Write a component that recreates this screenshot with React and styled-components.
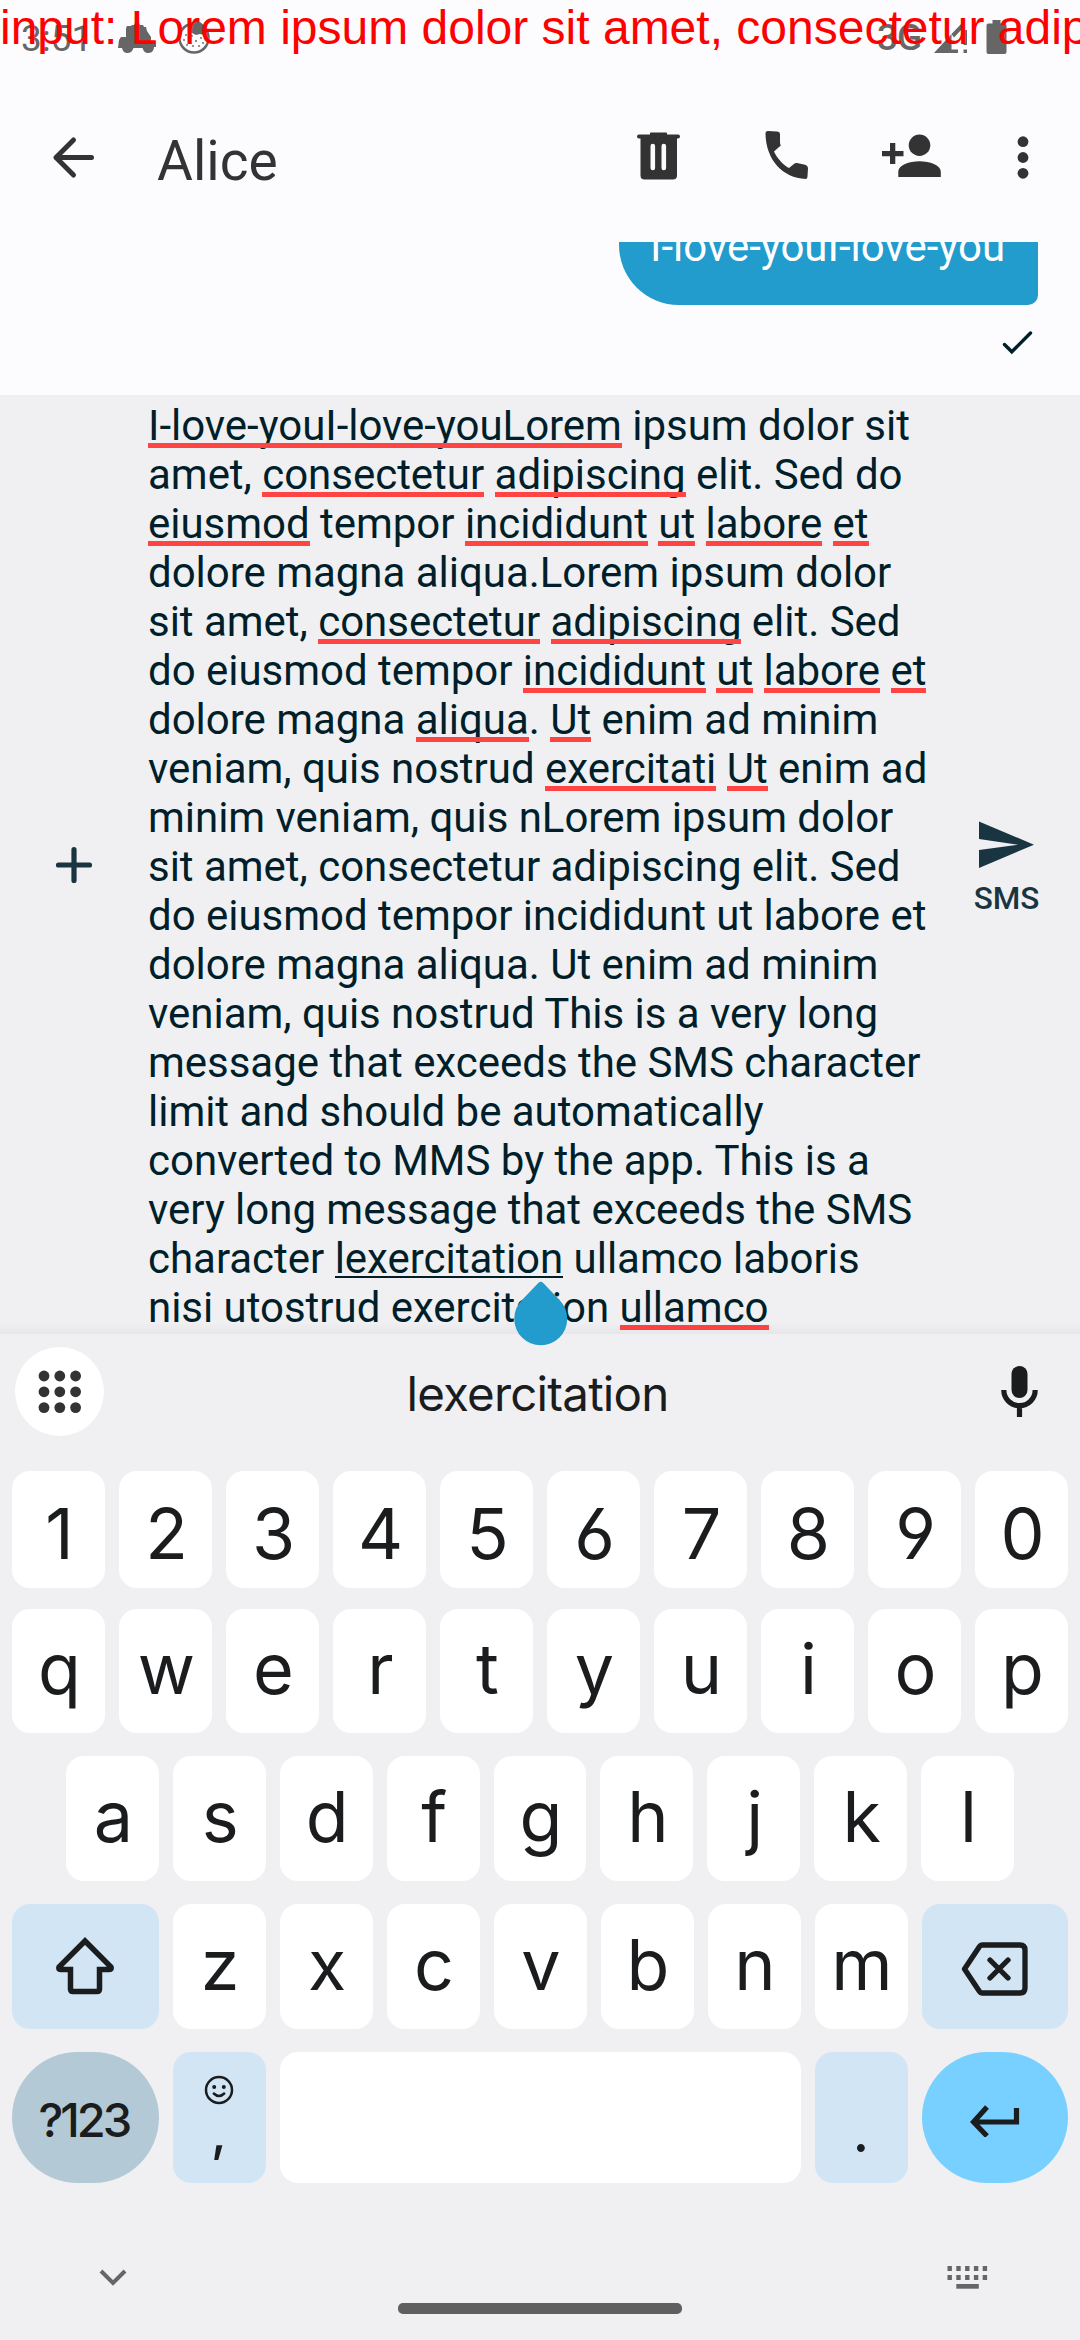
import React from "react";
import styled, { createGlobalStyle } from "styled-components";

const Global = createGlobalStyle`
  * { box-sizing: border-box; }
  html, body { margin: 0; padding: 0; background: #fcfcff; }
  svg { display: block; }
`;

const Screen = styled.div`
  position: relative;
  width: 1080px;
  height: 2340px;
  display: flex;
  flex-direction: column;
  overflow: hidden;
  background: #fcfcff;
  font-family: Roboto, "Liberation Sans", sans-serif;
`;

const DebugText = styled.div`
  position: absolute;
  top: 0;
  left: 0;
  width: 1080px;
  overflow: hidden;
  white-space: nowrap;
  font: 48px/55px "Liberation Sans", Arial, sans-serif;
  color: #ff0000;
`;

const StatusBar = styled.header`
  height: 80px;
  display: flex;
  align-items: flex-start;
  padding: 18px 73px 0 21px;
  color: #666;
`;
const Clock = styled.span`
  font-size: 37px;
  line-height: 42px;
  width: 97px;
`;
const StatusIcons = styled.div`
  display: flex;
  gap: 22px;
  padding-top: 2px;
`;
const StatusRight = styled.div`
  margin-left: auto;
  display: flex;
  align-items: flex-start;
`;
const Network = styled.span`
  font-size: 37px;
  line-height: 42px;
  font-weight: 500;
  letter-spacing: -1px;
  width: 57px;
  margin-top: -1px;
`;
const Signal = styled.svg`
  margin: 2px 18px 0 0;
`;
const Battery = styled.svg`
  margin-top: 2px;
`;

const AppBar = styled.div`
  height: 162px;
  display: flex;
  align-items: flex-start;
  padding: 50px 50px 0 51px;
  color: #333;
`;
const Title = styled.h1`
  margin: -1px 0 0 60px;
  font-size: 55px;
  line-height: 64px;
  font-weight: 400;
`;
const BackIcon = styled.svg`
  margin-top: 5px;
`;
const Actions = styled.div`
  display: flex;
  margin-left: auto;
  align-items: flex-start;
`;
const Action = styled.svg`
  margin-left: ${(p) => p.$gap}px;
`;

const Thread = styled.main`
  height: 153px;
  display: flex;
  flex-direction: column;
  align-items: flex-end;
  padding-right: 42px;
  overflow: hidden;
`;
const Bubble = styled.div`
  width: 419px;
  height: 63px;
  background: #229bcd;
  color: #fff;
  border-radius: 0 0 10px 60px;
  padding-left: 31px;
  font-size: 42px;
  line-height: 49px;
  overflow: hidden;
  white-space: nowrap;
`;
const BubbleText = styled.div`
  margin-top: -20px;
`;
const Sent = styled.svg`
  margin: 25px 4px 0 0;
`;

const Compose = styled.section`
  position: relative;
  height: 939px;
  display: grid;
  grid-template-columns: 148px 800px 1fr;
  background: #f0f0f2;
  color: #001f2a;
`;
const Attach = styled.div`
  display: flex;
  align-items: center;
  justify-content: center;
`;
const Draft = styled.div`
  padding-top: 6px;
  font-size: 42px;
  line-height: 49px;
  letter-spacing: -0.025px;
  white-space: pre;
`;
const Line = styled.div`
  height: 49px;
`;
const Marked = styled.span`
  position: relative;
  &::after {
    content: "";
    position: absolute;
    left: 0;
    right: 0;
    top: 42px;
    height: ${(p) => (p.$composing ? 2 : 5.3)}px;
    background: ${(p) => (p.$composing ? "#001f2a" : "#ff4444")};
  }
`;
const Send = styled.div`
  display: flex;
  flex-direction: column;
  align-items: center;
  padding: 426px 15px 0 0;
  color: #1a3542;
  font-size: 31.5px;
  line-height: 38px;
  font-weight: 500;
`;
const SendLabel = styled.span`
  margin-top: 11px;
`;
const Shade = styled.div`
  position: absolute;
  left: 0;
  right: 0;
  bottom: 0;
  height: 12px;
  background: linear-gradient(rgba(0, 0, 0, 0), rgba(0, 0, 0, 0.04));
`;
const Handle = styled.svg`
  position: absolute;
  left: 514px;
  top: 1281px;
`;

const Keyboard = styled.section`
  height: 1006px;
  display: flex;
  flex-direction: column;
  background: #f0f0f2;
  color: #1a1c1e;
  font-family: Inter, Roboto, sans-serif;
`;
const Strip = styled.div`
  height: 137px;
  display: flex;
  align-items: flex-start;
  padding: 13px 42px 0 15px;
`;
const Apps = styled.div`
  width: 89px;
  height: 89px;
  border-radius: 50%;
  background: #fff;
  display: flex;
  align-items: center;
  justify-content: center;
`;
const Suggestion = styled.span`
  flex: 1;
  text-align: center;
  padding: 17px 0 0 0;
  margin-right: 30px;
  font-size: 47.5px;
  line-height: 60px;
  letter-spacing: -0.8px;
`;
const Mic = styled.svg`
  margin-top: 19px;
`;
const Row = styled.div`
  display: flex;
  gap: 14px;
  padding: 0 ${(p) => p.$inset || 12}px;
  height: ${(p) => p.$height}px;
  margin-bottom: ${(p) => p.$after || 23}px;
`;
const fills = {
  letter: "#ffffff",
  mod: "#d2e5f4",
  symbols: "#b4c9d6",
  enter: "#77d0ff",
};
const Key = styled.div`
  flex: 0 1 ${(p) => p.$width || 93}px;
  min-width: 0;
  display: flex;
  flex-direction: column;
  align-items: center;
  justify-content: center;
  border-radius: ${(p) => (p.$pill ? 66 : 18)}px;
  background: ${(p) => fills[p.$kind || "letter"]};
  font-size: 70px;
  line-height: 84px;
  font-feature-settings: "cv03", "cv04";
  padding: ${(p) => p.$pad || "0 0 4px 2px"};
`;
const ModeLabel = styled.span`
  font-size: 47px;
  font-weight: 500;
  letter-spacing: -3px;
`;
const Period = styled.span`
  font-size: 60px;
  line-height: 60px;
  padding-top: 28px;
`;
const Comma = styled.span`
  font-size: 52px;
  line-height: 50px;
  height: 54px;
  font-weight: 500;
  margin-top: 3px;
`;
const NavBar = styled.div`
  flex: 1;
  display: grid;
  grid-template-columns: 1fr 284px 1fr;
  align-items: start;
  color: #666;
  padding-top: 64px;
`;
const HideIcon = styled.svg`
  margin: 3px 0 0 99px;
`;
const Pill = styled.div`
  height: 11px;
  margin-top: 38px;
  border-radius: 5px;
  background: #5f5f5f;
`;
const Switcher = styled.svg`
  margin: 0 0 0 265px;
`;

const draft = [
  "[I-love-youI-love-youLorem] ipsum dolor sit",
  "amet, [consectetur] [adipiscing] elit. Sed do",
  "[eiusmod] tempor [incididunt] [ut] [labore] [et]",
  "dolore magna aliqua.Lorem ipsum dolor",
  "sit amet, [consectetur] [adipiscing] elit. Sed",
  "do eiusmod tempor [incididunt] [ut] [labore] [et]",
  "dolore magna [aliqua]. [Ut] enim ad minim",
  "veniam, quis nostrud [exercitati] [Ut] enim ad",
  "minim veniam, quis nLorem ipsum dolor",
  "sit amet, consectetur adipiscing elit. Sed",
  "do eiusmod tempor incididunt ut labore et",
  "dolore magna aliqua. Ut enim ad minim",
  "veniam, quis nostrud This is a very long",
  "message that exceeds the SMS character",
  "limit and should be automatically",
  "converted to MMS by the app. This is a",
  "very long message that exceeds the SMS",
  "character {lexercitation} ullamco laboris",
  "nisi utostrud exercitation [ullamco]",
];

function renderLine(text) {
  return text.split(/(\[[^\]]+\]|\{[^}]+\})/).map((part, i) => {
    if (part[0] === "[") return <Marked key={i}>{part.slice(1, -1)}</Marked>;
    if (part[0] === "{") return <Marked key={i} $composing>{part.slice(1, -1)}</Marked>;
    return part;
  });
}

const Keys = ({ chars, pad }) =>
  chars.split("").map((c) => <Key key={c} $pad={pad}>{c}</Key>);

const gridDots = [0, 1, 2].flatMap((r) => [0, 1, 2].map((c) => [c, r]));
const kbDots = [0, 1].flatMap((r) => [0, 1, 2, 3, 4].map((c) => [c, r]));

export default function App() {
  return (
    <Screen>
      <Global />
      <StatusBar>
        <Clock>3:51</Clock>
        <StatusIcons>
          <svg width="38" height="34" viewBox="0 0 38 34" fill="currentColor">
            <path d="M9 6h4l1-1h2l1-2h4l1 2h3l1 2h2l1 4 4 6v4l3 1v1l2 1v3h-2c0 3-2 6-5.500 6s-5-2-6-5h-9c-1 3-3 5-6 5s-5-2-5.500-5H0l1-8 2-3h5V8z" />
          </svg>
          <svg width="32" height="34" viewBox="0 0 32 34">
            <ellipse cx="16" cy="18" rx="14.500" ry="14.500" fill="none" stroke="#666" strokeWidth="2.500" />
            <path d="M12 4l4-3 6 1 5 4 3 5-4 4-4-1-4 1-4-2-3-4z" fill="#666" />
            <g fill="#666">
              <circle cx="8" cy="15" r="0.900" /><circle cx="6" cy="20" r="0.900" />
              <circle cx="11" cy="19" r="0.900" /><circle cx="18" cy="21" r="1" />
              <circle cx="23" cy="18" r="0.900" /><circle cx="15" cy="26" r="0.900" />
              <circle cx="21" cy="26" r="0.900" /><circle cx="9" cy="25" r="0.900" />
              <circle cx="25" cy="23" r="0.900" /><circle cx="14" cy="16" r="0.900" />
            </g>
          </svg>
        </StatusIcons>
        <StatusRight>
          <Network>3G</Network>
          <Signal width="34" height="34" viewBox="0 0 34 34" fill="currentColor">
            <path d="M0 33L17.500 14v15.500H24V33z" />
            <path d="M17.500 14L29 2v6l-9 9.500z" />
            <path d="M29.500 10H33v15h-3.500zM29.500 29.500H33V33h-3.500z" />
          </Signal>
          <Battery width="21" height="35" viewBox="0 0 21 35" fill="currentColor">
            <path d="M6.500 0h8v3.500H18.500q2 0 2 2V32q0 2-2 2H2.500q-2 0-2-2V5.500q0-2 2-2h4z" />
          </Battery>
        </StatusRight>
      </StatusBar>

      <AppBar>
        <BackIcon width="46" height="46" viewBox="0 0 46 46" fill="none" stroke="currentColor" strokeWidth="5" strokeLinecap="round" strokeLinejoin="round">
          <path d="M40.500 22.500H5M22.500 5L5 22.500 22.500 40" />
        </BackIcon>
        <Title>Alice</Title>
        <Actions>
          <Action $gap={0} width="43" height="51" viewBox="0 0 43 51">
            <path fill="currentColor" d="M13 3q0-0.500 1-0.500h15q1 0 1 0.500v1.500h11q2 0 2 2t-2 2h-1V45.500q0 4-4 4H7.500q-4 0-4-4V8.500H2q-2 0-2-2t2-2h11zM13.500 16v22a2.300 2.300 0 0 0 4.600 0V16a2.300 2.300 0 0 0-4.600 0zM24.500 16v22a2.300 2.300 0 0 0 4.600 0V16a2.300 2.300 0 0 0-4.600 0z" fillRule="evenodd" />
          </Action>
          <Action $gap={85.5} width="43" height="51" viewBox="0 0 43 51" fill="currentColor">
            <path d="M3 1l9 .4q3 0 3 3V12q0 2 .8 3.600L9 21.500C12 28 18 35 24 38l5.500-4.500q1-.7 2.500-.4l7 1.300q4 .8 4 4L42.500 46q0 3-2 3C18 48 1 30 .5 4Q.3 1 3 1z" />
          </Action>
          <Action $gap={74} width="60" height="51" viewBox="0 0 60 51" fill="currentColor">
            <ellipse cx="37.500" cy="15.300" rx="10.800" ry="10.700" />
            <path d="M16.300 47v-5.500c0-6.500 11-10.300 21.200-10.300s21.300 3.800 21.300 10.300V47zM8 13h5.300v8h8.200v5.300h-8.200V34H8v-7.700H0V21h8z" />
          </Action>
          <Action $gap={75} width="13" height="51" viewBox="0 0 13 51" fill="currentColor">
            <circle cx="6" cy="11.700" r="5.400" /><circle cx="6" cy="27.500" r="5.400" /><circle cx="6" cy="43.300" r="5.400" />
          </Action>
        </Actions>
      </AppBar>

      <Thread>
        <Bubble><BubbleText>I-love-youI-love-you</BubbleText></Bubble>
        <Sent width="32" height="26" viewBox="0 0 32 26" fill="none" stroke="#001f2a" strokeWidth="3.400" strokeLinecap="round">
          <path d="M2.500 14.500L9.800 21.800 28.500 3" />
        </Sent>
      </Thread>

      <Compose>
        <Attach>
          <svg width="40" height="40" viewBox="0 0 40 40" fill="none" stroke="#1a3542" strokeWidth="5.200" strokeLinecap="round">
            <path d="M20 4.500v31M4.500 20h31" />
          </svg>
        </Attach>
        <Draft>
          {draft.map((t, i) => <Line key={i}>{renderLine(t)}</Line>)}
        </Draft>
        <Send>
          <svg width="55" height="48" viewBox="0 0 55 48" fill="currentColor">
            <path d="M0 0.500L55 23.700 0 47V29L39 23.700 0 18z" />
          </svg>
          <SendLabel>SMS</SendLabel>
        </Send>
        <Shade />
      </Compose>

      <Keyboard>
        <Strip>
          <Apps>
            <svg width="46" height="46" viewBox="0 0 46 46" fill="#333">
              {gridDots.map(([c, r]) => (
                <circle key={`${c}${r}`} cx={7 + c * 15.8} cy={7 + r * 15.8} r="5.400" />
              ))}
            </svg>
          </Apps>
          <Suggestion>lexercitation</Suggestion>
          <Mic width="37" height="51" viewBox="0 0 37 51">
            <rect x="10.500" y="0" width="16" height="32" rx="8" fill="currentColor" />
            <path d="M2.800 24a15.700 15.700 0 0 0 31.400 0M18.500 39v12" fill="none" stroke="currentColor" strokeWidth="5.200" />
          </Mic>
        </Strip>

        <Row $height={117} $after={21}><Keys chars="1234567890" pad="8px 0 0 2px" /></Row>
        <Row $height={124}><Keys chars="qwertyuiop" /></Row>
        <Row $height={125} $inset={66}><Keys chars="asdfghjkl" /></Row>
        <Row $height={125}>
          <Key $width={146.5} $kind="mod" $pad="0">
            <svg width="60" height="60" viewBox="0 0 60 60" fill="none" stroke="currentColor" strokeWidth="5.500" strokeLinejoin="miter">
              <path d="M30 4L4 30q-1 2.500 1.500 2.500H15.500V52q0 2.500 2.500 2.500h24q2.500 0 2.500-2.500V32.500H54.500q2.500 0 1.500-2.500z" />
            </svg>
          </Key>
          <Keys chars="zxcvbnm" />
          <Key $width={146.5} $kind="mod" $pad="4px 0 0">
            <svg width="68" height="54" viewBox="0 0 68 54" fill="none" stroke="currentColor" strokeWidth="5.300" strokeLinecap="round" strokeLinejoin="round">
              <path d="M21 3H59q5 0 5 5V46q0 5-5 5H21q-1.500 0-2.500-1.500L3.500 27 18.500 4.500Q19.500 3 21 3z" />
              <path d="M29 18L47 36M47 18L29 36" />
            </svg>
          </Key>
        </Row>
        <Row $height={131} $after={18}>
          <Key $width={146.5} $kind="symbols" $pill $pad="4px 3px 0 0"><ModeLabel>?123</ModeLabel></Key>
          <Key $kind="mod" $pad="2px 0 0">
            <svg width="30" height="30" viewBox="0 0 30 30" fill="none" stroke="currentColor" strokeWidth="2.500">
              <circle cx="15" cy="15" r="13" />
              <path d="M9.800 18.500q5.200 5 10.400 0" strokeLinecap="round" />
              <g fill="currentColor" stroke="none"><circle cx="10.200" cy="12" r="2" /><circle cx="19.800" cy="12" r="2" /></g>
            </svg>
            <Comma>,</Comma>
          </Key>
          <Key $width={521} />
          <Key $kind="mod" $pad="0 0 4px"><Period>.</Period></Key>
          <Key $width={146.5} $kind="enter" $pill $pad="4px 0 0">
            <svg width="50" height="34" viewBox="0 0 50 34" fill="none" stroke="currentColor" strokeWidth="5.200">
              <path d="M46.500 5V19H4M17 4L3.500 19 17 33" />
            </svg>
          </Key>
        </Row>

        <NavBar>
          <HideIcon width="28" height="20" viewBox="0 0 28 20" fill="none" stroke="currentColor" strokeWidth="4">
            <path d="M2 3L14 15 26 3" />
          </HideIcon>
          <Pill />
          <Switcher width="42" height="26" viewBox="0 0 42 26" fill="currentColor">
            {kbDots.map(([c, r]) => (
              <rect key={`${c}${r}`} x={0.5 + c * 8.8} y={1 + r * 9} width="4.400" height="5" />
            ))}
            <rect x="9.300" y="19" width="22.500" height="4.700" />
          </Switcher>
        </NavBar>
      </Keyboard>

      <Handle width="54" height="66" viewBox="0 0 54 66" fill="#229bcd">
        <path d="M24.500 1.800Q26.800-.3 29 1.800L45.500 19A26.500 26.500 0 1 1 8 19z" />
      </Handle>
      <DebugText>input: Lorem ipsum dolor sit amet, consectetur adip</DebugText>
    </Screen>
  );
}
